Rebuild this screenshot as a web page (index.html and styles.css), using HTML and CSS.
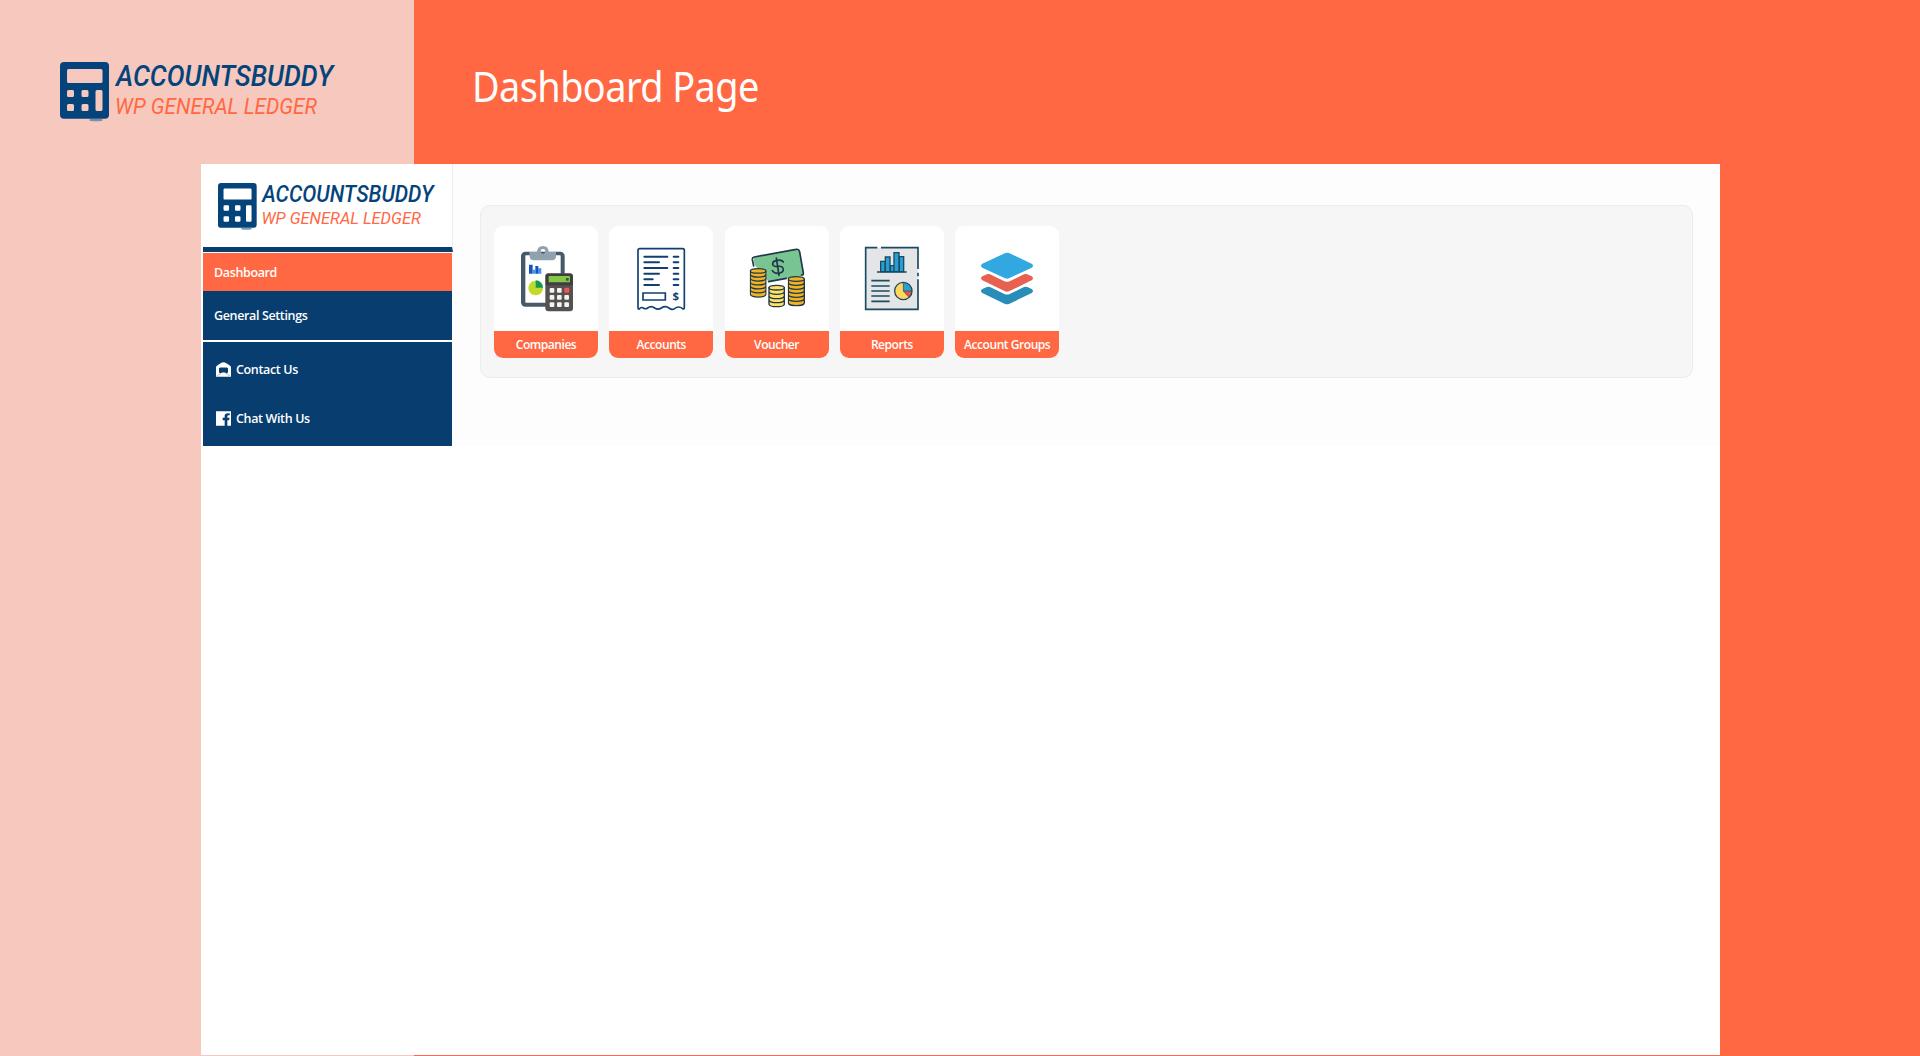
FILE: index.html
```html
<!DOCTYPE html>
<html lang="en">
<head>
<meta charset="utf-8">
<title>AccountsBuddy – Dashboard Page</title>
<link rel="stylesheet" href="styles.css">
</head>
<body>
<svg class="defs" aria-hidden="true">
  <symbol id="calculator" viewBox="0 0 50 62">
    <ellipse cx="36" cy="58" rx="7" ry="1.3" fill="#4b7ba5" opacity=".75"/>
    <path fill="#04447a" fill-rule="evenodd" d="M4 0H45Q49 0 49 4V52.700Q49 56.700 45 56.700H4Q0 56.700 0 52.700V4Q0 0 4 0ZM8.500 7Q7 7 7 8.500V19.500Q7 21 8.500 21H41Q42.500 21 42.500 19.500V8.500Q42.500 7 41 7ZM8.500 28Q7 28 7 29.500V33.500Q7 35 8.500 35H12.500Q14 35 14 33.500V29.500Q14 28 12.500 28ZM23 28Q21.500 28 21.500 29.500V33.500Q21.500 35 23 35H27Q28.500 35 28.500 33.500V29.500Q28.500 28 27 28ZM8.500 42Q7 42 7 43.500V47.500Q7 49 8.500 49H12.500Q14 49 14 47.500V43.500Q14 42 12.500 42ZM23 42Q21.500 42 21.500 43.500V47.500Q21.500 49 23 49H27Q28.500 49 28.500 47.500V43.500Q28.500 42 27 42ZM37 28Q35.500 28 35.500 29.500V47.500Q35.500 49 37 49H41Q42.500 49 42.500 47.500V29.500Q42.500 28 41 28Z"/>
  </symbol>
  <symbol id="coin-stack" viewBox="0 0 52 92">
    <path d="M2 8V81Q2 89 26 89T50 81V8Z" fill="currentColor"/>
    <path d="M2 20Q4 28 26 28T50 20M2 32Q4 40 26 40T50 32M2 44Q4 52 26 52T50 44M2 56Q4 64 26 64T50 56M2 68Q4 76 26 76T50 68M2 8V81Q4 89 26 89T50 81V8" fill="none" stroke="#22384a" stroke-width="4"/>
    <ellipse cx="26" cy="9" rx="24" ry="7" fill="currentColor" stroke="#22384a" stroke-width="4"/>
  </symbol>
</svg>

<div class="page">
  <header class="banner">
    <div class="banner-brand">
      <svg class="logo-large" viewBox="0 0 280 62">
        <use href="#calculator" width="50" height="62"/>
        <text class="logo-name" x="56" y="24" textLength="217" lengthAdjust="spacingAndGlyphs">ACCOUNTSBUDDY</text>
        <text class="logo-sub" x="55" y="51.500" textLength="202" lengthAdjust="spacingAndGlyphs">WP GENERAL LEDGER</text>
      </svg>
    </div>
    <h1 class="title">Dashboard Page</h1>
  </header>

  <div class="window">
    <aside class="sidebar">
      <div class="brand">
        <svg class="logo-small" viewBox="0 0 280 62">
          <use href="#calculator" width="50" height="62"/>
          <text class="logo-name" x="56" y="24" textLength="217" lengthAdjust="spacingAndGlyphs">ACCOUNTSBUDDY</text>
          <text class="logo-sub" x="55" y="51.500" textLength="202" lengthAdjust="spacingAndGlyphs">WP GENERAL LEDGER</text>
        </svg>
      </div>
      <nav>
        <a class="item active">Dashboard</a>
        <a class="item settings">General Settings</a>
        <div class="support">
          <a class="item contact">
            <svg class="nav-icon" viewBox="0 0 45 44"><path fill="#fff" fill-rule="evenodd" d="M0 44V14Q2 9 14 3Q22 -2 31 3Q43 9 45 14V44ZM9 18V31L14 34L18 31H27L31 34L36 31V18Q34 16 31 16H14Q11 16 9 18Z"/><path d="M2 42L16 33M43 42L29 33" stroke="#8fa5bb" stroke-width="2"/></svg>Contact Us</a>
          <a class="item chat">
            <svg class="nav-icon" viewBox="0 0 45 44"><path fill="#fff" d="M0 0H45V44H34V27H39L41 20H34V15Q34 12 38 12H41V6H36Q26 6 26 14V20H20V27H26V44H0Z"/></svg>Chat With Us</a>
        </div>
      </nav>
    </aside>

    <main class="content">
      <section class="group">
        <a class="card">
          <svg class="art" viewBox="42 31 312 315">
            <rect x="123" y="108" width="131" height="165" rx="13" fill="#455966"/>
            <rect x="136" y="119" width="106" height="142" rx="2" fill="#fff"/>
            <path fill="#90a2ad" fill-rule="evenodd" d="M148 109H171Q172 91 189 91T206 109H228V122Q228 134 215 134H162Q149 134 149 122ZM189 100A7 7 0 1 0 189 114A7 7 0 1 0 189 100Z"/>
            <path fill="#1556bd" d="M147 147H158V174H147ZM166 151H175V174H166Z"/>
            <path fill="#4a90e8" d="M157 162H166V174H157ZM174 158H184V174H174Z"/>
            <circle cx="167" cy="217" r="22" fill="#c3d92c"/><path fill="#139c4d" d="M167 194A22 22 0 0 1 189 216H167Z"/>
            <rect x="196" y="173" width="83" height="114" rx="9" fill="#545150"/>
            <path d="M197 209V182Q197 174 205 174H270Q278 174 278 182V209Z" fill="#3f3d3d"/>
            <rect x="206" y="181" width="64" height="19" rx="2" fill="#84c84b"/><path d="M258 187H266V195H258Z" fill="#2f5a2a"/>
            <g fill="#f3f3f3"><rect x="209" y="217" width="14" height="14" rx="3"/><rect x="231" y="217" width="14" height="14" rx="3"/><rect x="209" y="238" width="14" height="14" rx="3"/><rect x="231" y="238" width="14" height="14" rx="3"/><rect x="253" y="238" width="14" height="14" rx="3"/><rect x="209" y="260" width="14" height="14" rx="3"/><rect x="231" y="260" width="14" height="14" rx="3"/><rect x="253" y="260" width="14" height="14" rx="3"/></g>
            <rect x="253" y="216" width="15" height="15" rx="3" fill="#f05454"/>
          </svg>
          <span class="label">Companies</span>
        </a>
        <a class="card">
          <svg class="art" viewBox="388 31 312 315" fill="none" stroke="#123f73" stroke-width="5">
            <path stroke-linejoin="round" d="M475 276V104Q475 99 480 99H609Q614 99 614 104V276Q614 281 609 279Q596 269 585 279Q577 284 568 277Q557 269 545 277Q535 284 525 277Q515 269 504 277Q498 281 492 278Q486 272 479 280Q475 281 475 276Z"/>
            <path stroke-width="6" stroke-linecap="round" d="M494 123H563M494 140H538M494 157H563M494 174H538M494 191H519M494 208H538M582 123H596M582 140H596M582 157H596M582 174H596M582 191H596M582 208H596"/>
            <path d="M490 232H557V253H490Z"/>
            <text x="588" y="254" class="receipt-sign">$</text>
          </svg>
          <span class="label">Accounts</span>
        </a>
        <a class="card">
          <svg class="art" viewBox="29 31 312 315">
            <path d="M120 124L240 101Q251 98 254 110L265 175Q265 183 258 180L160 198L118 148Q112 126 120 124Z" fill="#78c592"/>
            <path d="M115 151L111 132Q110 126 117 124L242 101Q251 99 253 109L264 172Q265 179 258 178M160 198L213 188" fill="none" stroke="#22384a" stroke-width="5" stroke-linecap="round"/>
            <path d="M204 139Q199 131 186 134Q171 136 172 146Q174 154 188 152Q204 150 204 162Q203 171 190 173Q176 174 171 165M183 127L191 179" fill="none" stroke="#22384a" stroke-width="5" stroke-linecap="round"/>
            <use href="#coin-stack" x="103" y="156" width="51" height="92" color="#f0b323"/>
            <use href="#coin-stack" x="217" y="181" width="52" height="92" color="#f0b323"/>
            <g fill="#ffe166" stroke="#22384a" stroke-width="4"><path d="M161 216V266Q163 273 184 273T207 266V216Z"/><path fill="none" d="M161 229Q165 236 184 236T207 229M161 242Q165 249 184 249T207 242M161 254Q165 261 184 261T207 254"/><ellipse cx="184" cy="216" rx="23" ry="7"/></g>
          </svg>
          <span class="label">Voucher</span>
        </a>
        <a class="card">
          <svg class="art" viewBox="375 31 312 315">
            <path d="M452 96H609V281H452Z" fill="#e4e5e7"/>
            <path d="M487 96H452V281H609V191M498 96H609V160M609 171V182" fill="none" stroke="#1b4b61" stroke-width="5"/>
            <path d="M497 168V137H510V168ZM511 168V124H525V168ZM526 168V150H537V168ZM537 168V111H552V168ZM553 168V123H566V168Z" fill="#279fd6" stroke="#1b4b61" stroke-width="4"/>
            <path d="M486 169H575M469 195H524M469 211H524M469 226H524M469 241H524M469 257H524" stroke="#1b4b61" stroke-width="5"/>
            <circle cx="565" cy="226" r="26" fill="#ffd75e"/><path fill="#2e9fd0" d="M565 200A26 26 0 0 1 591 226H565Z"/><path fill="#ec5340" d="M565 226H591Q590 238 582 245Z"/>
            <path d="M565 200V226H591M565 226L582 245" fill="none" stroke="#1b4b61" stroke-width="2"/><circle cx="565" cy="226" r="26" fill="none" stroke="#1b4b61" stroke-width="4"/>
          </svg>
          <span class="label">Reports</span>
        </a>
        <a class="card">
          <svg class="art" viewBox="30 91 312 315">
            <path fill="#31a9e0" d="M181 172Q186 170 192 172L260 204Q268 210 260 216L192 248Q186 250 180 248L112 216Q104 210 112 204Z"/>
            <path fill="#e6614f" d="M112 242L126 236Q130 234 135 236L178 257Q186 260 194 257L237 236Q242 234 247 236L260 242Q268 248 260 254L192 287Q186 289 180 287L112 254Q104 248 112 242Z"/>
            <path fill="#288db9" d="M112 280L126 274Q130 272 135 274L178 295Q186 298 194 295L237 274Q242 272 247 274L260 280Q268 286 260 292L192 325Q186 327 180 325L112 292Q104 286 112 280Z"/>
          </svg>
          <span class="label">Account Groups</span>
        </a>
      </section>
    </main>
  </div>
</div>
</body>
</html>
```
FILE: styles.css
```css
* { box-sizing: border-box; }
body { margin: 0; }
.defs { position: absolute; width: 0; height: 0; }

.page {
  width: 1920px;
  height: 1056px;
  overflow: hidden;
  background: linear-gradient(90deg, #f7c8be 414px, #ff6842 414px);
  font-family: "Open Sans", "Noto Sans", sans-serif;
}

.banner { display: flex; height: 164px; }
.banner-brand { width: 414px; padding: 62px 0 0 60px; }
.logo-large { display: block; width: 280px; height: 62px; }
.logo-name, .logo-sub { font-family: Roboto, sans-serif; font-style: italic; }
.logo-name { font-size: 29.5px; font-weight: 500; fill: #04447a; }
.logo-sub { font-size: 21.8px; fill: #ff6842; }
.title {
  margin: 0;
  padding: 59px 0 0 58px;
  color: #fff;
  font: 400 41px/54px "Noto Sans", sans-serif;
  letter-spacing: -0.6px;
  transform: scaleX(0.923);
  transform-origin: 58px 0;
}

.window {
  display: flex;
  width: 1519px;
  height: 891px;
  margin-left: 201px;
  background: #fff;
}

.sidebar { width: 252px; padding-left: 2px; }
.brand {
  height: 88px;
  padding: 19px 0 0 15px;
  border-right: 1px solid #ececef;
  border-bottom: 5px solid #083e6f;
}
.logo-small { display: block; width: 221px; height: 49px; }
nav { width: 249px; padding-top: 1px; }
.item {
  display: flex;
  align-items: center;
  color: #fff;
  font-size: 12.5px;
  font-weight: 650;
  letter-spacing: -0.36px;
  white-space: nowrap;
}
.active { height: 38px; padding-left: 11px; background: #ff6842; }
.settings { height: 49px; padding-left: 11px; background: #083e6f; }
.support { height: 104px; margin-top: 2px; padding: 3px 0 0 13px; background: #083e6f; }
.contact, .chat { height: 49px; }
.nav-icon { width: 15px; height: 15px; margin-right: 5px; }

.content { flex: 1; height: 282px; padding: 41px 27px 0 26.5px; background: #fdfdfd; }
.group {
  display: flex;
  gap: 11.3px;
  height: 173px;
  padding: 20px 13.5px;
  border: 1px solid #ececec;
  border-radius: 10px;
  background: #f6f6f6;
}
.card {
  display: flex;
  flex-direction: column;
  width: 104px;
  height: 132px;
  overflow: hidden;
  border-radius: 9px;
  background: #fff;
}
.art { flex: none; width: 104px; height: 105px; }
.label {
  height: 27px;
  background: #ff6842;
  color: #fff;
  font-size: 12px;
  font-weight: 650;
  letter-spacing: -0.45px;
  line-height: 28px;
  text-align: center;
  white-space: nowrap;
}
.receipt-sign {
  fill: #123f73;
  stroke: none;
  font: 700 34px "Open Sans", sans-serif;
  text-anchor: middle;
}
```
